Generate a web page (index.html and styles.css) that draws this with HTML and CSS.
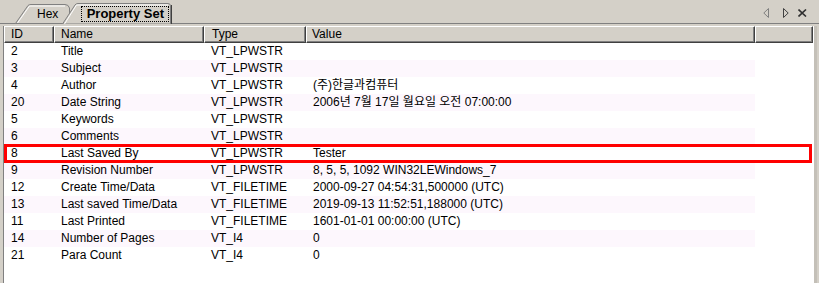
FILE: index.html
```html
<!DOCTYPE html>
<html lang="ko">
<head>
    <meta charset="UTF-8">
    <title>Property Set</title>
    <link rel="stylesheet" href="styles.css">
</head>
<body>
    <div class="window">
        <div class="tabstrip">
            <svg class="tab-shapes" width="819" height="24" viewBox="0 0 819 24">
                <line x1="0" y1="23.5" x2="64" y2="23.5" stroke="#808080"/>
                <line x1="171" y1="23.5" x2="819" y2="23.5" stroke="#808080"/>
                <path d="M15.5,23.5 L28,5.5 Q29,4.5 31,4.5 L65,4.5 Q68.5,4.5 69.5,8 L69.5,23.5 Z" fill="#d4d0c8" stroke="#808080"/>
                <path d="M17.5,23 L29.5,6 L65,6" fill="none" stroke="#ffffff"/>
                <path d="M62.5,24 L75,5 Q76,3.5 78,3.5 L168,3.5 Q170.5,3.5 170.5,6 L170.5,24 Z" fill="#d4d0c8" stroke="#808080"/>
                <path d="M64.5,24 L76.5,5 L168,5" fill="none" stroke="#ffffff"/>
                <line x1="171.5" y1="5" x2="171.5" y2="24" stroke="#404040"/>
            </svg>
            <span class="tab-label hex">Hex</span>
            <span class="tab-label active"><span class="focus">Property Set</span></span>
            <div class="tab-nav">
                <svg width="7" height="10" viewBox="0 0 7 10"><path d="M5.5,0.5 L0.8,5 L5.5,9.5 Z" fill="none" stroke="#808080"/></svg>
                <svg width="7" height="10" viewBox="0 0 7 10"><path d="M0.5,0.5 L5.2,5 L0.5,9.5 Z" fill="none" stroke="#404040"/></svg>
                <svg width="9" height="8" viewBox="0 0 9 8"><path d="M0.5,0.5 L8,7.5 M8,0.5 L0.5,7.5" stroke="#303030" stroke-width="1.6"/></svg>
            </div>
        </div>

        <div class="panel">
            <div class="list">
                <div class="row head">
                    <div class="cell c-id">ID</div>
                    <div class="cell c-name">Name</div>
                    <div class="cell c-type">Type</div>
                    <div class="cell c-value">Value</div>
                    <div class="cell c-fill"></div>
                </div>
                <div class="row">
                    <div class="cell c-id">2</div><div class="cell c-name">Title</div><div class="cell c-type">VT_LPWSTR</div><div class="cell c-value"></div>
                </div>
                <div class="row">
                    <div class="cell c-id">3</div><div class="cell c-name">Subject</div><div class="cell c-type">VT_LPWSTR</div><div class="cell c-value"></div>
                </div>
                <div class="row">
                    <div class="cell c-id">4</div><div class="cell c-name">Author</div><div class="cell c-type">VT_LPWSTR</div><div class="cell c-value">(주)한글과컴퓨터</div>
                </div>
                <div class="row">
                    <div class="cell c-id">20</div><div class="cell c-name">Date String</div><div class="cell c-type">VT_LPWSTR</div><div class="cell c-value">2006년 7월 17일 월요일 오전 07:00:00</div>
                </div>
                <div class="row">
                    <div class="cell c-id">5</div><div class="cell c-name">Keywords</div><div class="cell c-type">VT_LPWSTR</div><div class="cell c-value"></div>
                </div>
                <div class="row">
                    <div class="cell c-id">6</div><div class="cell c-name">Comments</div><div class="cell c-type">VT_LPWSTR</div><div class="cell c-value"></div>
                </div>
                <div class="row marked">
                    <div class="cell c-id">8</div><div class="cell c-name">Last Saved By</div><div class="cell c-type">VT_LPWSTR</div><div class="cell c-value">Tester</div>
                </div>
                <div class="row">
                    <div class="cell c-id">9</div><div class="cell c-name">Revision Number</div><div class="cell c-type">VT_LPWSTR</div><div class="cell c-value">8, 5, 5, 1092 WIN32LEWindows_7</div>
                </div>
                <div class="row">
                    <div class="cell c-id">12</div><div class="cell c-name">Create Time/Data</div><div class="cell c-type">VT_FILETIME</div><div class="cell c-value">2000-09-27 04:54:31,500000 (UTC)</div>
                </div>
                <div class="row">
                    <div class="cell c-id">13</div><div class="cell c-name">Last saved Time/Data</div><div class="cell c-type">VT_FILETIME</div><div class="cell c-value">2019-09-13 11:52:51,188000 (UTC)</div>
                </div>
                <div class="row">
                    <div class="cell c-id">11</div><div class="cell c-name">Last Printed</div><div class="cell c-type">VT_FILETIME</div><div class="cell c-value">1601-01-01 00:00:00 (UTC)</div>
                </div>
                <div class="row">
                    <div class="cell c-id">14</div><div class="cell c-name">Number of Pages</div><div class="cell c-type">VT_I4</div><div class="cell c-value">0</div>
                </div>
                <div class="row">
                    <div class="cell c-id">21</div><div class="cell c-name">Para Count</div><div class="cell c-type">VT_I4</div><div class="cell c-value">0</div>
                </div>
            </div>
        </div>
    </div>
</body>
</html>
```

FILE: styles.css
```css
body {
    margin: 0;
    padding: 0;
    background-color: #d4d0c8;
    font-family: "Liberation Sans", Arial, "Noto Sans CJK KR", sans-serif;
    font-size: 12px;
    color: #000;
    overflow: hidden;
}
.window {
    width: 819px;
    height: 283px;
}
.tabstrip {
    position: relative;
    height: 24px;
    display: flex;
    align-items: center;
    padding-right: 12px;
}
.tab-shapes {
    position: absolute;
    top: 0;
    left: 0;
}
.tab-label {
    position: relative;
    line-height: 14px;
    padding-top: 3px;
}
.tab-label.hex {
    margin-left: 37px;
}
.tab-label.active {
    margin-left: 23px;
    font-weight: bold;
    font-size: 13px;
}
.focus {
    display: block;
    border: 1px dotted #000;
    padding: 0 3px 0 3px;
    width: 80px;
    text-align: center;
}
.tab-nav {
    position: relative;
    margin-left: auto;
    display: flex;
    align-items: center;
    gap: 13px;
    padding-top: 2px;
}
.tab-nav svg:last-child {
    margin-left: -5px;
}
.panel {
    padding: 2px 2px 0 3px;
    height: 257px;
}
.list {
    background-color: #fff;
    border-left: 1px solid #808080;
    border-right: 3px solid #c4c0b8;
    height: 100%;
}
.row {
    display: flex;
    height: 17px;
    line-height: 17px;
    white-space: nowrap;
}
.cell {
    box-sizing: border-box;
    padding-left: 7px;
    overflow: hidden;
}
.c-id { width: 50px; }
.c-name { width: 150px; }
.c-type { width: 102px; }
.c-value { width: 449px; }
.c-fill { width: 58px; }
.row:nth-child(odd) .cell {
    background-color: #fdf7fd;
}
.row.head .cell {
    background-color: #d4d0c8;
    border-top: 1px solid #fff;
    border-left: 1px solid #fff;
    border-right: 1px solid #404040;
    border-bottom: 1px solid #404040;
    box-shadow: inset -1px -1px 0 #808080;
    line-height: 14px;
    padding-left: 6px;
}
.row.head .c-id { padding-left: 6px; }
.row.head .c-name { padding-left: 6px; }
.row.head .c-type { padding-left: 7px; }
.row.head .c-value { padding-left: 5px; }
.row.marked {
    position: relative;
}
.row.marked::after {
    content: "";
    position: absolute;
    top: -1px;
    bottom: -1px;
    left: 0;
    right: 2px;
    border: 3px solid #ff0000;
}
```
